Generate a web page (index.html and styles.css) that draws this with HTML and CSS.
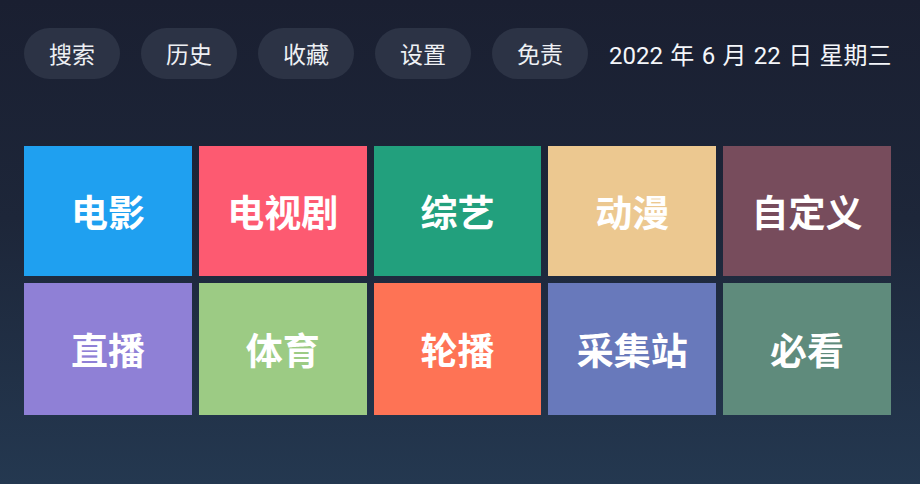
FILE: index.html
```html
<!DOCTYPE html>
<html lang="zh-CN">
<head>
<meta charset="utf-8">
<title>首页</title>
<link rel="stylesheet" href="styles.css">
</head>
<body>
<div class="page">
  <header class="topbar">
    <button class="pill">搜索</button>
    <button class="pill">历史</button>
    <button class="pill">收藏</button>
    <button class="pill">设置</button>
    <button class="pill">免责</button>
    <div class="date">2022 年 6 月 22 日 星期三</div>
  </header>
  <main class="grid">
    <div class="tile t-blue">电影</div>
    <div class="tile t-red">电视剧</div>
    <div class="tile t-green">综艺</div>
    <div class="tile t-tan">动漫</div>
    <div class="tile t-maroon">自定义</div>
    <div class="tile t-purple">直播</div>
    <div class="tile t-lime">体育</div>
    <div class="tile t-orange">轮播</div>
    <div class="tile t-indigo">采集站</div>
    <div class="tile t-sage">必看</div>
  </main>
</div>
</body>
</html>
```
FILE: styles.css
```css
html, body {
  margin: 0;
  padding: 0;
  height: 100%;
}
body {
  background: linear-gradient(180deg, #1a1f31 0%, #1d2639 45%, #243850 100%);
  font-family: Roboto, "Noto Sans CJK SC", sans-serif;
  color: #f2f4f8;
}
.page {
  padding: 28px 0 0 24px;
}
.topbar {
  display: flex;
  align-items: center;
  gap: 21px;
  height: 51px;
}
.pill {
  height: 51px;
  width: 96px;
  border: none;
  border-radius: 26px;
  background: #2c3345;
  color: #eef0f4;
  font-family: "Noto Sans CJK SC", sans-serif;
  font-size: 23px;
  padding: 0;
  line-height: 51px;
}
.date {
  font-size: 24px;
  word-spacing: 1.4px;
  color: #f4f6fa;
  white-space: nowrap;
}
.grid {
  margin-top: 67px;
  width: 867px;
  display: grid;
  grid-template-columns: repeat(5, 1fr);
  grid-template-rows: 130px 132px;
  gap: 7px;
}
.tile {
  display: flex;
  align-items: center;
  justify-content: center;
  font-family: "Noto Sans CJK SC", sans-serif;
  font-weight: 700;
  font-size: 37px;
  color: #ffffff;
}
.t-blue { background: #1fa0f0; }
.t-red { background: #fd5a71; }
.t-green { background: #22a07d; }
.t-tan { background: #ecc890; }
.t-maroon { background: #774c5c; }
.t-purple { background: #8f80d6; }
.t-lime { background: #9ccb84; }
.t-orange { background: #fe7355; }
.t-indigo { background: #6879bb; }
.t-sage { background: #5f8b7c; }
```
